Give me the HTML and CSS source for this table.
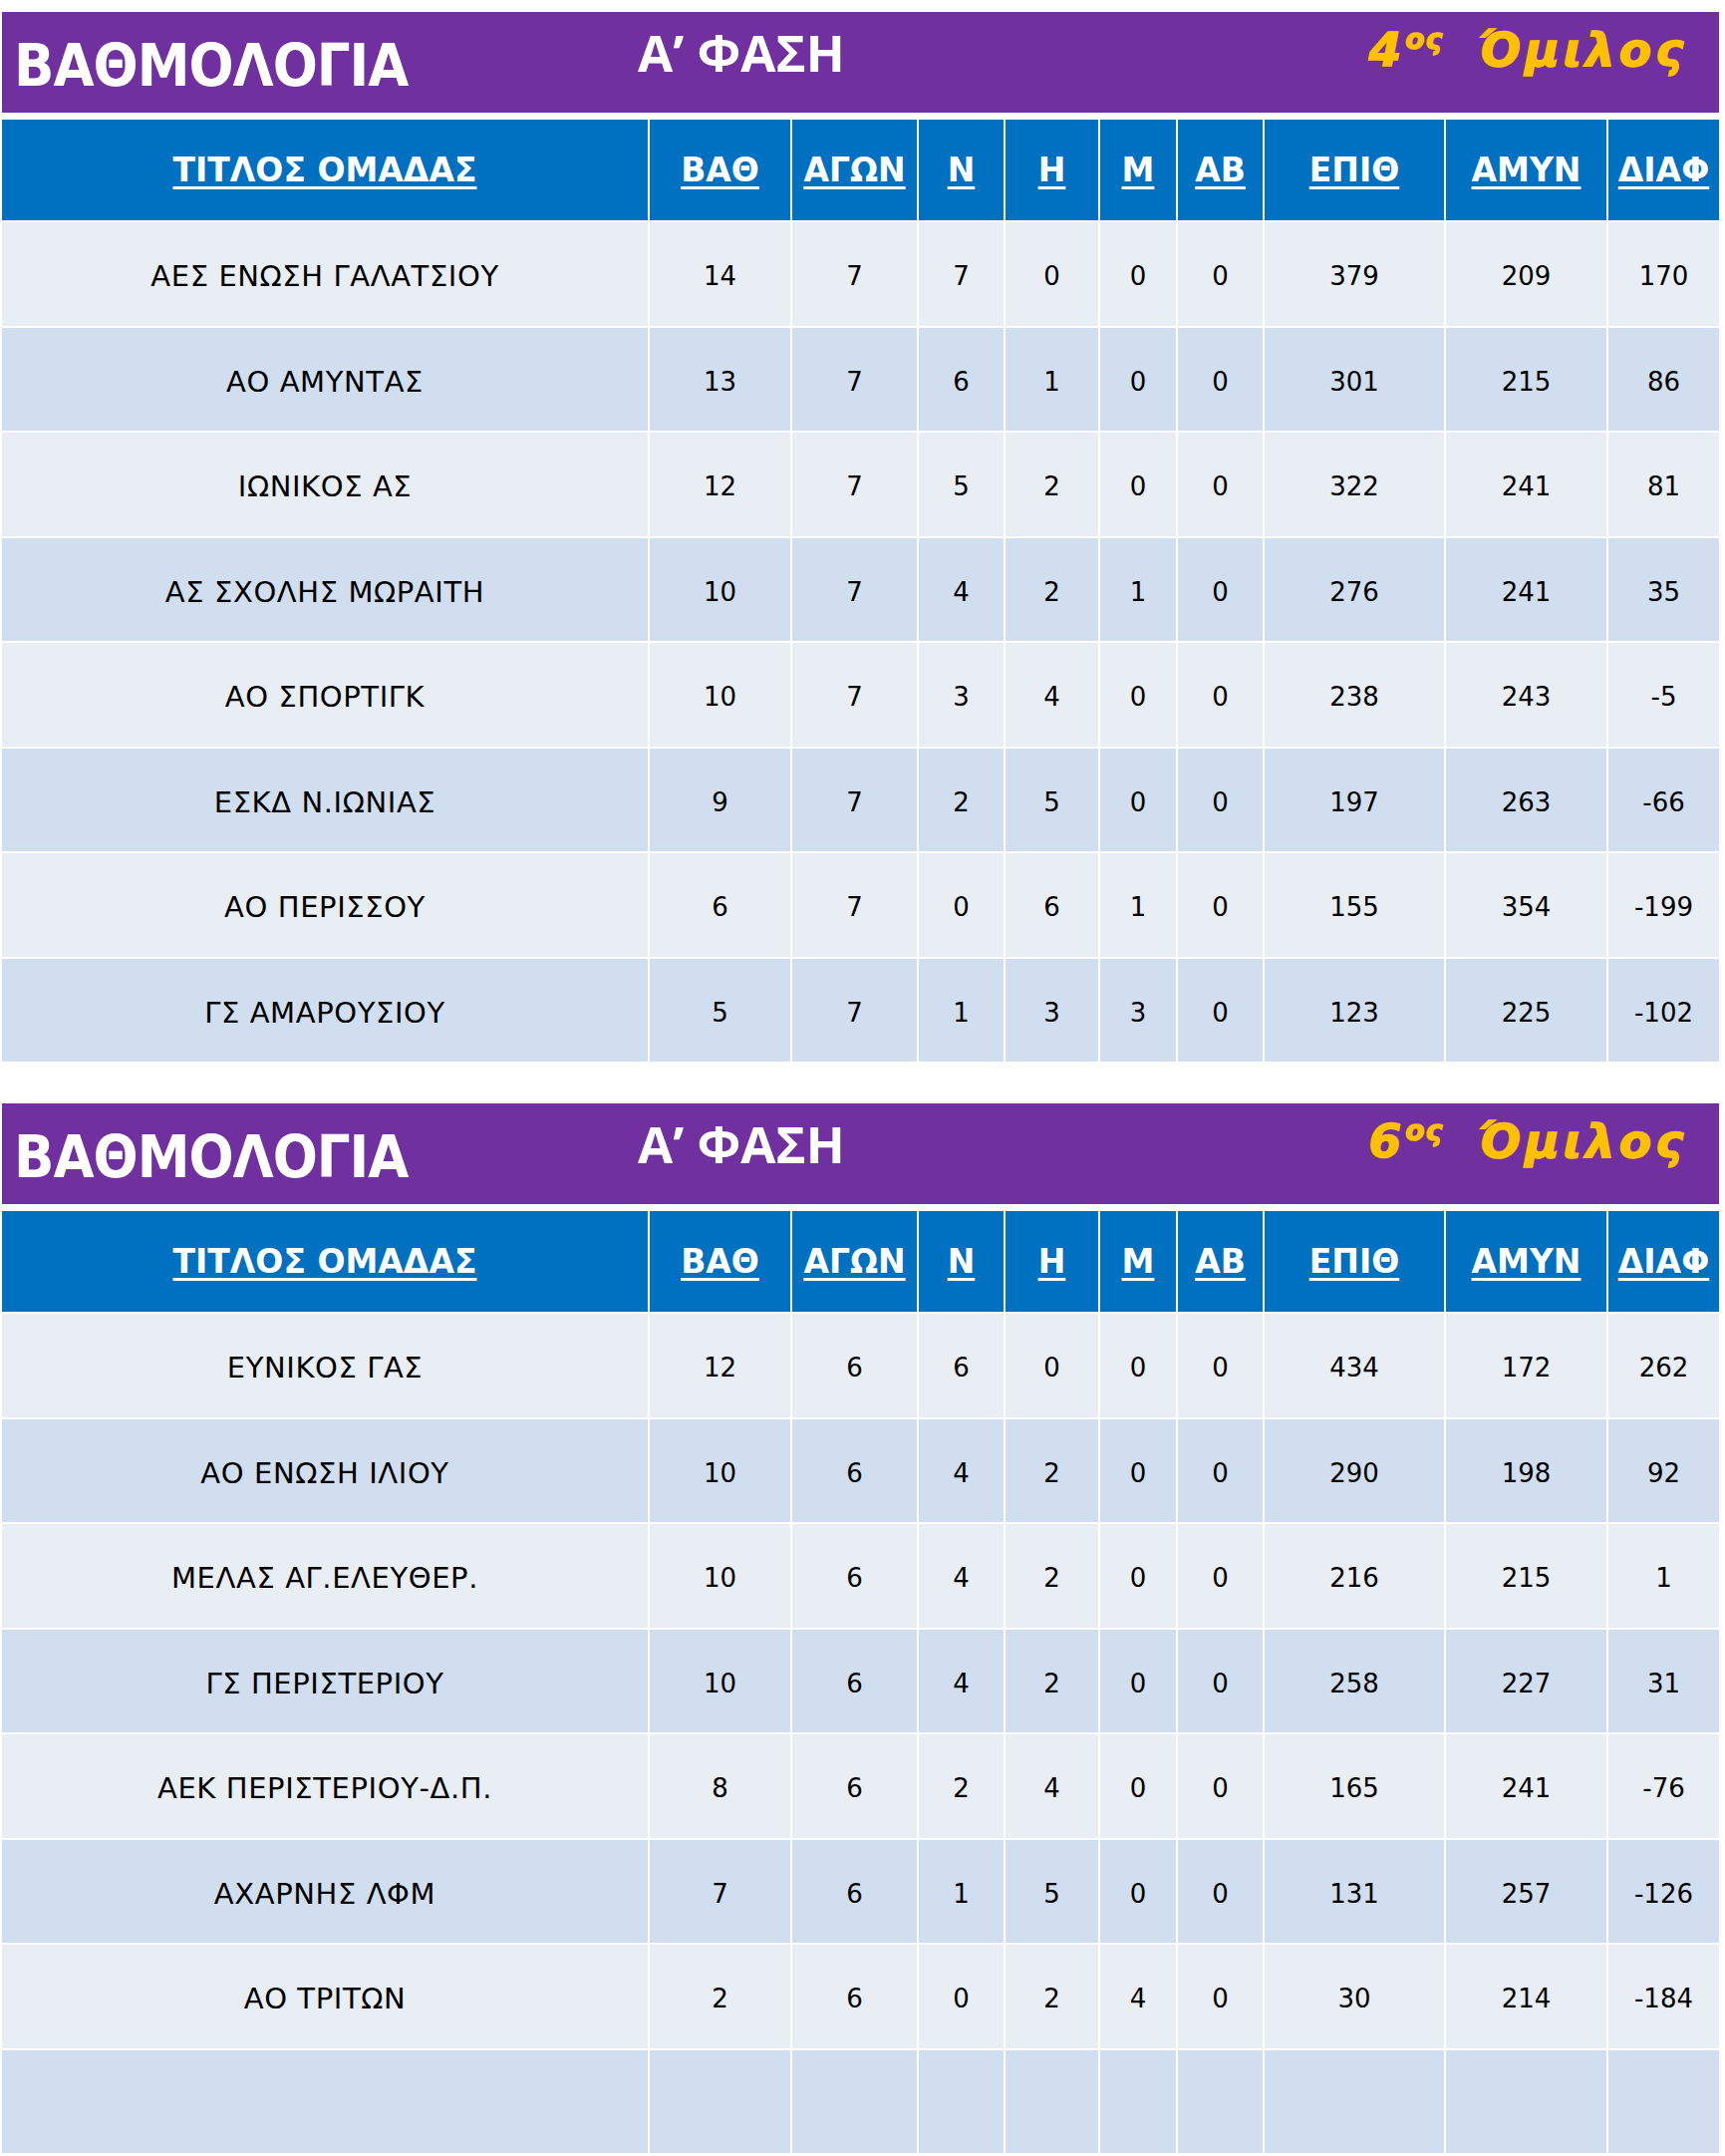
FILE: index.html
```html
<!DOCTYPE html>
<html lang="el">
<head>
<meta charset="utf-8">
<title>ΒΑΘΜΟΛΟΓΙΑ</title>
<link rel="stylesheet" href="styles.css">
</head>
<body>
<section class="group">
  <header class="banner">
    <h1 class="banner-title">ΒΑΘΜΟΛΟΓΙΑ</h1>
    <div class="banner-phase">Α’ ΦΑΣΗ</div>
    <div class="banner-group">4<sup>ος</sup> Όμιλος</div>
  </header>
  <table class="standings">
    <thead>
      <tr>
        <th class="c-name"><u>ΤΙΤΛΟΣ ΟΜΑΔΑΣ</u></th>
        <th class="c-pts"><u>ΒΑΘ</u></th>
        <th class="c-gp"><u>ΑΓΩΝ</u></th>
        <th class="c-w"><u>Ν</u></th>
        <th class="c-l"><u>Η</u></th>
        <th class="c-m"><u>Μ</u></th>
        <th class="c-ab"><u>ΑΒ</u></th>
        <th class="c-for"><u>ΕΠΙΘ</u></th>
        <th class="c-ag"><u>ΑΜΥΝ</u></th>
        <th class="c-diff"><u>ΔΙΑΦ</u></th>
      </tr>
    </thead>
    <tbody>
      <tr><td class="team">ΑΕΣ ΕΝΩΣΗ ΓΑΛΑΤΣΙΟΥ</td><td>14</td><td>7</td><td>7</td><td>0</td><td>0</td><td>0</td><td>379</td><td>209</td><td>170</td></tr>
      <tr><td class="team">ΑΟ ΑΜΥΝΤΑΣ</td><td>13</td><td>7</td><td>6</td><td>1</td><td>0</td><td>0</td><td>301</td><td>215</td><td>86</td></tr>
      <tr><td class="team">ΙΩΝΙΚΟΣ ΑΣ</td><td>12</td><td>7</td><td>5</td><td>2</td><td>0</td><td>0</td><td>322</td><td>241</td><td>81</td></tr>
      <tr><td class="team">ΑΣ ΣΧΟΛΗΣ ΜΩΡΑΙΤΗ</td><td>10</td><td>7</td><td>4</td><td>2</td><td>1</td><td>0</td><td>276</td><td>241</td><td>35</td></tr>
      <tr><td class="team">ΑΟ ΣΠΟΡΤΙΓΚ</td><td>10</td><td>7</td><td>3</td><td>4</td><td>0</td><td>0</td><td>238</td><td>243</td><td>-5</td></tr>
      <tr><td class="team">ΕΣΚΔ Ν.ΙΩΝΙΑΣ</td><td>9</td><td>7</td><td>2</td><td>5</td><td>0</td><td>0</td><td>197</td><td>263</td><td>-66</td></tr>
      <tr><td class="team">ΑΟ ΠΕΡΙΣΣΟΥ</td><td>6</td><td>7</td><td>0</td><td>6</td><td>1</td><td>0</td><td>155</td><td>354</td><td>-199</td></tr>
      <tr><td class="team">ΓΣ ΑΜΑΡΟΥΣΙΟΥ</td><td>5</td><td>7</td><td>1</td><td>3</td><td>3</td><td>0</td><td>123</td><td>225</td><td>-102</td></tr>
    </tbody>
  </table>
</section>

<section class="group group-second">
  <header class="banner">
    <h1 class="banner-title">ΒΑΘΜΟΛΟΓΙΑ</h1>
    <div class="banner-phase">Α’ ΦΑΣΗ</div>
    <div class="banner-group">6<sup>ος</sup> Όμιλος</div>
  </header>
  <table class="standings">
    <thead>
      <tr>
        <th class="c-name"><u>ΤΙΤΛΟΣ ΟΜΑΔΑΣ</u></th>
        <th class="c-pts"><u>ΒΑΘ</u></th>
        <th class="c-gp"><u>ΑΓΩΝ</u></th>
        <th class="c-w"><u>Ν</u></th>
        <th class="c-l"><u>Η</u></th>
        <th class="c-m"><u>Μ</u></th>
        <th class="c-ab"><u>ΑΒ</u></th>
        <th class="c-for"><u>ΕΠΙΘ</u></th>
        <th class="c-ag"><u>ΑΜΥΝ</u></th>
        <th class="c-diff"><u>ΔΙΑΦ</u></th>
      </tr>
    </thead>
    <tbody>
      <tr><td class="team">ΕΥΝΙΚΟΣ ΓΑΣ</td><td>12</td><td>6</td><td>6</td><td>0</td><td>0</td><td>0</td><td>434</td><td>172</td><td>262</td></tr>
      <tr><td class="team">ΑΟ ΕΝΩΣΗ ΙΛΙΟΥ</td><td>10</td><td>6</td><td>4</td><td>2</td><td>0</td><td>0</td><td>290</td><td>198</td><td>92</td></tr>
      <tr><td class="team">ΜΕΛΑΣ ΑΓ.ΕΛΕΥΘΕΡ.</td><td>10</td><td>6</td><td>4</td><td>2</td><td>0</td><td>0</td><td>216</td><td>215</td><td>1</td></tr>
      <tr><td class="team">ΓΣ ΠΕΡΙΣΤΕΡΙΟΥ</td><td>10</td><td>6</td><td>4</td><td>2</td><td>0</td><td>0</td><td>258</td><td>227</td><td>31</td></tr>
      <tr><td class="team">ΑΕΚ ΠΕΡΙΣΤΕΡΙΟΥ-Δ.Π.</td><td>8</td><td>6</td><td>2</td><td>4</td><td>0</td><td>0</td><td>165</td><td>241</td><td>-76</td></tr>
      <tr><td class="team">ΑΧΑΡΝΗΣ ΛΦΜ</td><td>7</td><td>6</td><td>1</td><td>5</td><td>0</td><td>0</td><td>131</td><td>257</td><td>-126</td></tr>
      <tr><td class="team">ΑΟ ΤΡΙΤΩΝ</td><td>2</td><td>6</td><td>0</td><td>2</td><td>4</td><td>0</td><td>30</td><td>214</td><td>-184</td></tr>
      <tr><td class="team"></td><td></td><td></td><td></td><td></td><td></td><td></td><td></td><td></td><td></td></tr>
    </tbody>
  </table>
</section>
</body>
</html>
```

FILE: styles.css
```css
html, body {
  margin: 0;
  padding: 0;
  background: #ffffff;
}

body {
  padding-top: 12px;
  font-family: "DejaVu Sans", Verdana, sans-serif;
  color: #000;
}

.group-second {
  margin-top: 40px;
}

.banner {
  display: flex;
  align-items: flex-start;
  margin: 0 6px 5px 2px;
  height: 101px;
  background: #7030a0;
  color: #fff;
}

.banner-title {
  width: 626px;
  margin: 24px 0 0;
  padding-left: 12px;
  font-family: "DejaVu Sans Condensed", "DejaVu Sans", sans-serif;
  font-stretch: condensed;
  font-weight: bold;
  font-size: 59px;
  line-height: 1;
  letter-spacing: -1px;
}

.banner-phase {
  margin-top: 15px;
  font-family: "Open Sans", sans-serif;
  font-weight: bold;
  font-size: 51px;
  line-height: 1;
}

.banner-group {
  margin: 14px 32px 0 auto;
  font-family: "DejaVu Sans", sans-serif;
  font-weight: bold;
  font-style: italic;
  font-size: 47px;
  line-height: 1;
  color: #ffc000;
  letter-spacing: 4px;
  -webkit-text-stroke: 1.5px #ffc000;
}

.banner-group sup {
  font-size: 28px;
  vertical-align: 17px;
  margin-right: 16px;
  letter-spacing: 1px;
}

.standings {
  border-collapse: separate;
  border-spacing: 2px;
  table-layout: fixed;
  width: 1727px;
  background: #fff;
}

.standings th,
.standings td {
  padding: 0;
  text-align: center;
  vertical-align: middle;
  white-space: nowrap;
  overflow: hidden;
}

.standings th {
  height: 101px;
  background: #0070c0;
  color: #fff;
  font-weight: bold;
  font-size: 33px;
}

.standings th u {
  text-decoration-thickness: 3px;
  text-underline-offset: 5px;
}

.standings td {
  height: 103.5px;
  padding-top: 5px;
  box-sizing: border-box;
  font-size: 26px;
}

.standings td.team {
  font-size: 29px;
  letter-spacing: 0.6px;
}

.standings tbody tr:nth-child(odd) td {
  background: #e9edf4;
}

.standings tbody tr:nth-child(even) td {
  background: #d0deef;
}

.c-name { width: 648px; }
.c-pts { width: 141px; }
.c-gp { width: 125px; }
.c-w { width: 85px; }
.c-l { width: 93px; }
.c-m { width: 76px; }
.c-ab { width: 85px; }
.c-for { width: 180px; }
.c-ag { width: 161px; }
.c-diff { width: 111px; }
```
